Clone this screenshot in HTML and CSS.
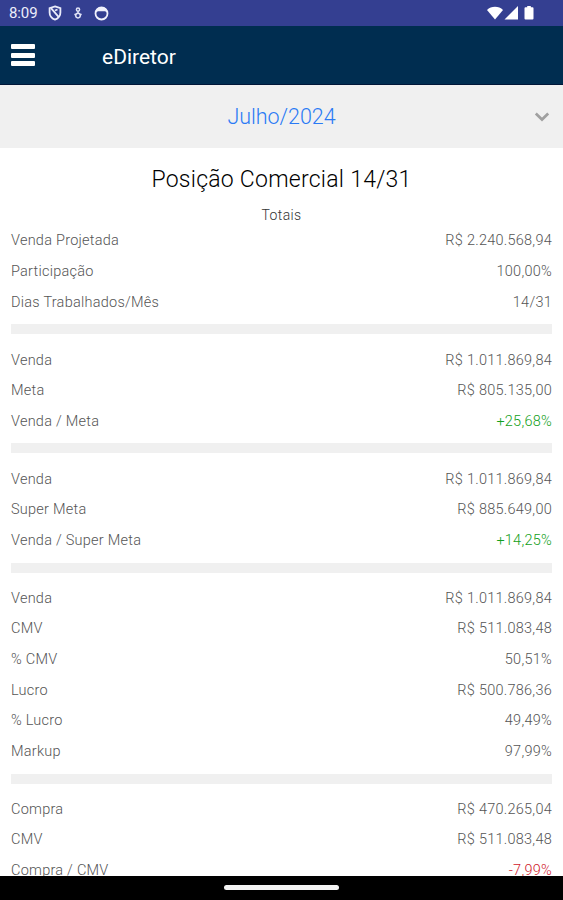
FILE: index.html
```html
<!DOCTYPE html>
<html lang="pt-BR">
<head>
<meta charset="utf-8">
<title>eDiretor</title>
<link rel="stylesheet" href="styles.css">
</head>
<body>
<div class="screen">
  <div class="status">
    <span class="time">8:09</span>
    <svg class="shield" width="14" height="16" viewBox="0 0 14 16" fill="none" stroke="#e9ebfa" stroke-width="1.8"><path d="M7 1.4 12.4 3.2V7.4C12.4 11 10 13.4 7 14.6 4 13.4 1.6 11 1.6 7.4V3.2Z"/><path d="M3 3.2 10.6 11.8M7 5.5 9.5 4.5"/></svg>
    <svg class="person" width="10" height="14" viewBox="0 0 10 14" fill="none" stroke="#dfe2f6" stroke-width="1.5"><circle cx="5" cy="3.6" r="1.6"/><path d="M5 5.200V8M1.300 8.600H3M7 8.600H8.700"/><circle cx="5" cy="9.600" r="2.300"/></svg>
    <svg class="face" width="15" height="15" viewBox="0 0 15 15"><circle cx="7.5" cy="7.5" r="6" fill="none" stroke="#f0f1fc" stroke-width="1.8"/><path d="M1.500 6.500C2 3 4.500 1 7.500 1s5.500 2 6 5.500L11 5.200H4Z" fill="#f0f1fc"/></svg>
    <svg class="signals" width="48" height="16" viewBox="0 0 48 16" fill="#fff"><path d="M0 4C4-.2 12-.2 16 4L8 13.500Z"/><path d="M31 0V13.500H17.500Z"/><path d="M40.200 0H43.800V1.200H45.500Q46.500 1.200 46.500 2.200V12.500Q46.500 13.500 45.500 13.500H38.500Q37.500 13.500 37.500 12.500V2.200Q37.500 1.200 38.500 1.200H40.200Z"/></svg>
  </div>
  <header class="appbar">
    <div class="menu"><i></i><i></i><i></i></div>
    <div class="brand">eDiretor</div>
  </header>
  <div class="month">
    <span class="month-name">Julho/2024</span>
    <svg class="chevron" width="16" height="10" viewBox="0 0 16 10" fill="none" stroke="#a0a0a0" stroke-width="2.700"><path d="M1.800 1.500 8 7.500 14.200 1.500"/></svg>
  </div>
  <main class="content">
    <h1>Posição Comercial 14/31</h1>
    <h2>Totais</h2>
    <section>
      <div class="row"><span>Venda Projetada</span><span>R$ 2.240.568,94</span></div>
      <div class="row"><span>Participação</span><span>100,00%</span></div>
      <div class="row"><span>Dias Trabalhados/Mês</span><span>14/31</span></div>
    </section>
    <section>
      <div class="row"><span>Venda</span><span>R$ 1.011.869,84</span></div>
      <div class="row"><span>Meta</span><span>R$ 805.135,00</span></div>
      <div class="row"><span>Venda / Meta</span><span class="up">+25,68%</span></div>
    </section>
    <section>
      <div class="row"><span>Venda</span><span>R$ 1.011.869,84</span></div>
      <div class="row"><span>Super Meta</span><span>R$ 885.649,00</span></div>
      <div class="row"><span>Venda / Super Meta</span><span class="up">+14,25%</span></div>
    </section>
    <section>
      <div class="row"><span>Venda</span><span>R$ 1.011.869,84</span></div>
      <div class="row"><span>CMV</span><span>R$ 511.083,48</span></div>
      <div class="row"><span>% CMV</span><span>50,51%</span></div>
      <div class="row"><span>Lucro</span><span>R$ 500.786,36</span></div>
      <div class="row"><span>% Lucro</span><span>49,49%</span></div>
      <div class="row"><span>Markup</span><span>97,99%</span></div>
    </section>
    <section>
      <div class="row"><span>Compra</span><span>R$ 470.265,04</span></div>
      <div class="row"><span>CMV</span><span>R$ 511.083,48</span></div>
      <div class="row"><span>Compra / CMV</span><span class="down">-7,99%</span></div>
    </section>
  </main>
  <footer class="navbar"><div class="handle"></div></footer>
</div>
</body>
</html>
```
FILE: styles.css
```css
* { box-sizing: border-box; }
body { margin: 0; font-family: Roboto, "Liberation Sans", sans-serif; }
.screen { width: 563px; height: 900px; display: flex; flex-direction: column; overflow: hidden; background: #fff; }
.status { flex: none; height: 26px; display: flex; align-items: center; padding-left: 9px; background: #343f91; color: #eceefb; }
.time { width: 39px; font-size: 15px; line-height: 26px; letter-spacing: -.1px; }
.person { margin-left: 11px; }
.face { margin-left: 11px; }
.signals { margin: 1px 28px 0 auto; }
.appbar { flex: none; height: 59px; display: flex; align-items: center; padding: 0 11px; background: #002d50; border-bottom: 1px solid #001638; color: #fff; }
.menu { width: 24px; height: 22px; display: flex; flex-direction: column; justify-content: space-between; }
.menu i { height: 5px; border-radius: 1px; background: #fff; }
.brand { margin-left: 67px; padding-top: 3px; font-size: 21px; line-height: 26px; }
.month { flex: none; height: 63px; display: grid; grid-template-columns: 1fr auto 1fr; align-items: center; padding: 0 13px; background: #f0f0f0; }
.month-name { grid-column: 2; color: #2a7af5; font-size: 21.5px; font-weight: 300; letter-spacing: -.05px; }
.chevron { justify-self: end; }
.content { flex: 1; min-height: 0; overflow: hidden; padding: 0 11px; color: #555; }
h1 { margin: 17px 0 0; text-align: center; font-size: 23px; line-height: 30px; font-weight: 300; letter-spacing: .25px; color: #000; }
h2 { margin: 10px 0 0; text-align: center; font-size: 14px; line-height: 20px; font-weight: 300; letter-spacing: .35px; color: #333; }
section { font-size: 14.500px; font-weight: 300; }
section + section::before { content: ""; display: block; height: 10px; margin: 7.500px 0 9.800px; background: #f0f0f0; }
.row { height: 30.620px; padding-top: 1.200px; display: flex; align-items: center; justify-content: space-between; letter-spacing: .25px; }
.up { color: #12a020; }
.down { color: #d0202c; }
.navbar { flex: none; height: 24px; padding-top: 9px; background: #000; }
.handle { width: 115px; height: 5px; margin: 0 auto; border-radius: 3px; background: #f4f4f4; }
```
